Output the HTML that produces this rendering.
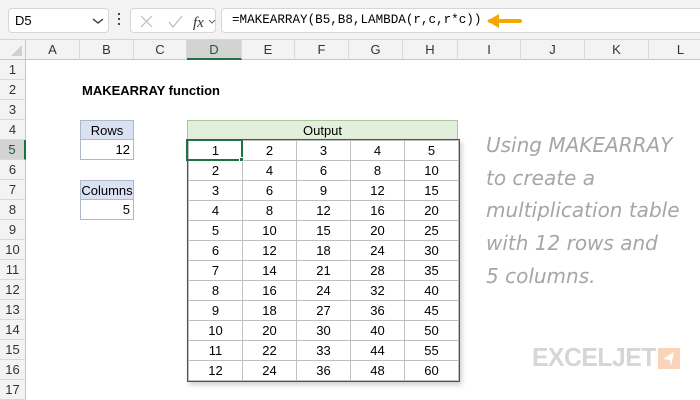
<!DOCTYPE html><html><head><style>
*{margin:0;padding:0;box-sizing:border-box}
body{width:700px;height:400px;overflow:hidden;background:#fff;font-family:"Liberation Sans",Arial,sans-serif;font-size:13px;color:#000;position:relative}
.a{position:absolute}
.top{left:0;top:0;width:700px;height:40px;background:#f3f3f3;border-bottom:1px solid #d4d4d4}
.box{background:#fff;border:1px solid #d6d6d6;border-radius:4px}
.ch{top:40px;height:20px;background:#f3f3f3;border-right:1px solid #d8d8d8;border-bottom:1px solid #c6c6c6;text-align:center;line-height:20px;color:#333;font-size:13px}
.rh{left:0;width:26px;height:20px;background:#f3f3f3;border-bottom:1px solid #d8d8d8;border-right:1px solid #c6c6c6;text-align:center;line-height:20px;color:#333}
.c{height:20px;line-height:20px;text-align:center}
table{border-collapse:collapse}
td{width:54px;height:20px;border:1px solid #bfbfbf;text-align:center;font-size:13px;padding:0;line-height:18px}
</style></head><body>
<div class="a top"></div>
<div class="a box" style="left:8px;top:8px;width:101px;height:25px;"><span class="a" style="left:6px;top:4px;font-size:13px">D5</span><svg class="a" style="left:83px;top:8px" width="12" height="8"><path d="M1 2l5 4 5-4" stroke="#333" fill="none" stroke-width="1.3"/></svg></div>
<div class="a" style="left:118px;top:13px;width:3px;height:15px;"><div style="width:2px;height:2px;background:#444;margin-bottom:3px"></div><div style="width:2px;height:2px;background:#444;margin-bottom:3px"></div><div style="width:2px;height:2px;background:#444"></div></div>
<div class="a box" style="left:130px;top:8px;width:86px;height:25px;">
<svg class="a" style="left:8px;top:5px" width="80" height="16"><path d="M2 2l11 11M13 2L2 13" stroke="#bbb" stroke-width="1.2"/><path d="M30 8l4 5 9-11" stroke="#bbb" stroke-width="1.2" fill="none"/><text x="54" y="13" font-family="Liberation Serif" font-style="italic" font-size="15" fill="#333">fx</text><path d="M70 6l3 3 3-3" stroke="#666" fill="none"/></svg></div>
<div class="a box" style="left:221px;top:8px;width:490px;height:25px;"><span class="a" style="left:10px;top:4px;font-family:'Liberation Mono',monospace;font-size:12.6px">=MAKEARRAY(B5,B8,LAMBDA(r,c,r*c))</span>
<svg class="a" style="left:264px;top:4px" width="40" height="16"><path d="M4 8H34" stroke="#f5a800" stroke-width="4" stroke-linecap="round"/><path d="M1 8L13 1V15Z" fill="#f5a800"/></svg></div>

<div class="a" style="left:0;top:40px;width:26px;height:20px;background:#f3f3f3;border-right:1px solid #c6c6c6;border-bottom:1px solid #c6c6c6"><svg width="26" height="20"><path d="M22 5V16H11Z" fill="#d0d0d0"/></svg></div>
<div class="a ch" style="left:26px;width:54px">A</div>
<div class="a ch" style="left:80px;width:54px">B</div>
<div class="a ch" style="left:134px;width:53px">C</div>
<div class="a ch" style="left:187px;width:55px;background:#d3d3d3;border-bottom:2px solid #1e7145;color:#1e5a35">D</div>
<div class="a ch" style="left:242px;width:53px">E</div>
<div class="a ch" style="left:295px;width:54px">F</div>
<div class="a ch" style="left:349px;width:54px">G</div>
<div class="a ch" style="left:403px;width:55px">H</div>
<div class="a ch" style="left:458px;width:63px">I</div>
<div class="a ch" style="left:521px;width:64px">J</div>
<div class="a ch" style="left:585px;width:64px">K</div>
<div class="a ch" style="left:649px;width:64px">L</div>

<div class="a rh" style="top:60px">1</div><div class="a rh" style="top:80px">2</div><div class="a rh" style="top:100px">3</div><div class="a rh" style="top:120px">4</div>
<div class="a rh" style="top:140px;background:#d3d3d3;border-right:2px solid #1e7145;color:#1e5a35">5</div>
<div class="a rh" style="top:160px">6</div><div class="a rh" style="top:180px">7</div><div class="a rh" style="top:200px">8</div><div class="a rh" style="top:220px">9</div><div class="a rh" style="top:240px">10</div><div class="a rh" style="top:260px">11</div><div class="a rh" style="top:280px">12</div><div class="a rh" style="top:300px">13</div><div class="a rh" style="top:320px">14</div><div class="a rh" style="top:340px">15</div><div class="a rh" style="top:360px">16</div><div class="a rh" style="top:380px">17</div>

<div class="a" style="left:82px;top:83px;font-weight:bold;font-size:13px">MAKEARRAY function</div>
<div class="a c" style="left:80px;top:120px;width:54px;background:#d9e1f2;border:1px solid #adb9ca">Rows</div>
<div class="a" style="left:80px;top:140px;width:54px;height:20px;border:1px solid #adb9ca;border-top:none;text-align:right;padding-right:3px;line-height:19px">12</div>
<div class="a c" style="left:80px;top:180px;width:54px;background:#d9e1f2;border:1px solid #adb9ca">Columns</div>
<div class="a" style="left:80px;top:200px;width:54px;height:20px;border:1px solid #adb9ca;border-top:none;text-align:right;padding-right:3px;line-height:19px">5</div>

<div class="a c" style="left:187px;top:120px;width:271px;background:#e2efda;border:1px solid #a9c79a">Output</div>
<div class="a" style="left:187px;top:139px;box-shadow:2px 3px 5px rgba(0,0,0,0.18);border:1.5px solid #2f5597">
<table>
<tr><td>1</td><td>2</td><td>3</td><td>4</td><td>5</td></tr>
<tr><td>2</td><td>4</td><td>6</td><td>8</td><td>10</td></tr>
<tr><td>3</td><td>6</td><td>9</td><td>12</td><td>15</td></tr>
<tr><td>4</td><td>8</td><td>12</td><td>16</td><td>20</td></tr>
<tr><td>5</td><td>10</td><td>15</td><td>20</td><td>25</td></tr>
<tr><td>6</td><td>12</td><td>18</td><td>24</td><td>30</td></tr>
<tr><td>7</td><td>14</td><td>21</td><td>28</td><td>35</td></tr>
<tr><td>8</td><td>16</td><td>24</td><td>32</td><td>40</td></tr>
<tr><td>9</td><td>18</td><td>27</td><td>36</td><td>45</td></tr>
<tr><td>10</td><td>20</td><td>30</td><td>40</td><td>50</td></tr>
<tr><td>11</td><td>22</td><td>33</td><td>44</td><td>55</td></tr>
<tr><td>12</td><td>24</td><td>36</td><td>48</td><td>60</td></tr>
</table></div>
<div class="a" style="left:186px;top:139px;width:57px;height:22px;border:2px solid #1e7145"></div>
<div class="a" style="left:239px;top:157px;width:5px;height:5px;background:#1e7145;border:1px solid #fff"></div>

<div class="a" style="left:486px;top:129px;width:215px;white-space:nowrap;font-family:'DejaVu Sans',sans-serif;font-size:20px;line-height:32.7px;color:#a6a6a6;font-style:italic">Using MAKEARRAY<br>to create a<br>multiplication table<br>with 12 rows and<br>5 columns.</div>

<div class="a" style="left:532px;top:342px;font-family:'Liberation Sans',sans-serif;font-weight:bold;font-size:26px;color:#d6d6d6;letter-spacing:-0.5px;transform:scaleX(0.95);transform-origin:left">EXCELJET</div>
<div class="a" style="left:658px;top:348px;width:22px;height:21px;background:#f9d4b8"><svg width="22" height="21"><path d="M16 4L5 11L12 12L13 18Z" fill="#fff"/></svg></div>
</body></html>
